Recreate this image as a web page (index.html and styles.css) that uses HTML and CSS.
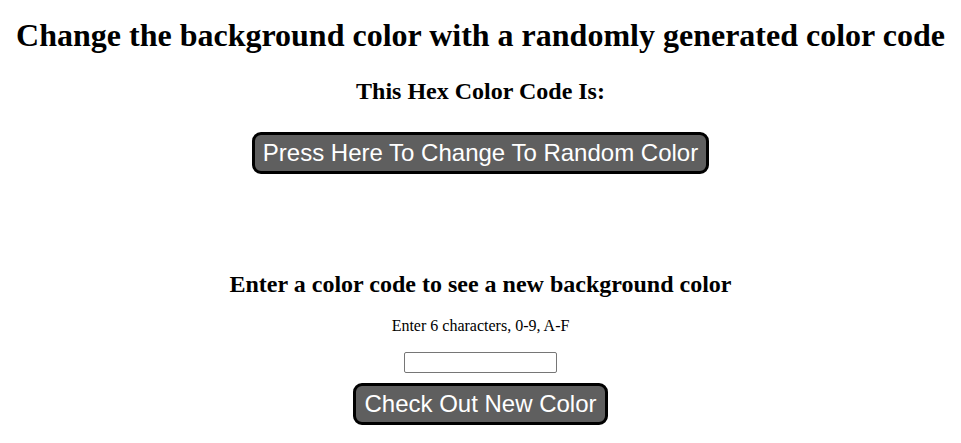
FILE: index.html
```html
<!DOCTYPE html>
<html>
<head>
<meta charset="utf-8">
<link rel="stylesheet" href="styles.css">
</head>
<body>
<main class="page">
  <h1 class="title">Change the background color with a randomly generated color code</h1>
  <h2 class="code-label">This Hex Color Code Is:</h2>
  <button class="btn btn-random">Press Here To Change To Random Color</button>
  <h2 class="enter-title">Enter a color code to see a new background color</h2>
  <p class="hint">Enter 6 characters, 0-9, A-F</p>
  <input class="code-input" type="text">
  <button class="btn btn-check">Check Out New Color</button>
</main>
</body>
</html>
```
FILE: styles.css
```css
body {
  margin: 0;
  background: #ffffff;
  font-family: "Liberation Serif", "Times New Roman", serif;
  color: #000;
}
.page {
  display: flex;
  flex-direction: column;
  align-items: center;
  text-align: center;
}
.title {
  font-size: 32px;
  font-weight: bold;
  margin: 17px 0 0;
  line-height: 37px;
}
.code-label {
  font-size: 24px;
  margin: 23px 0 0;
  line-height: 28px;
}
.btn {
  font-family: "Liberation Sans", Arial, sans-serif;
  font-size: 24px;
  color: #fff;
  background: #5f5f5f;
  border: 3px solid #000;
  border-radius: 9px;
  padding: 4px 8px;
  line-height: 28px;
}
.btn-random {
  margin-top: 27px;
}
.enter-title {
  font-size: 24px;
  margin: 96px 0 0;
  line-height: 28px;
}
.hint {
  font-size: 16px;
  margin: 19px 0 0;
  line-height: 18px;
}
.code-input {
  margin-top: 17px;
  width: 147px;
  height: 17px;
  padding: 1px 2px;
  border: 1px solid #767676;
  border-radius: 2px;
  box-sizing: content-box;
}
.btn-check {
  margin-top: 10px;
}
```
